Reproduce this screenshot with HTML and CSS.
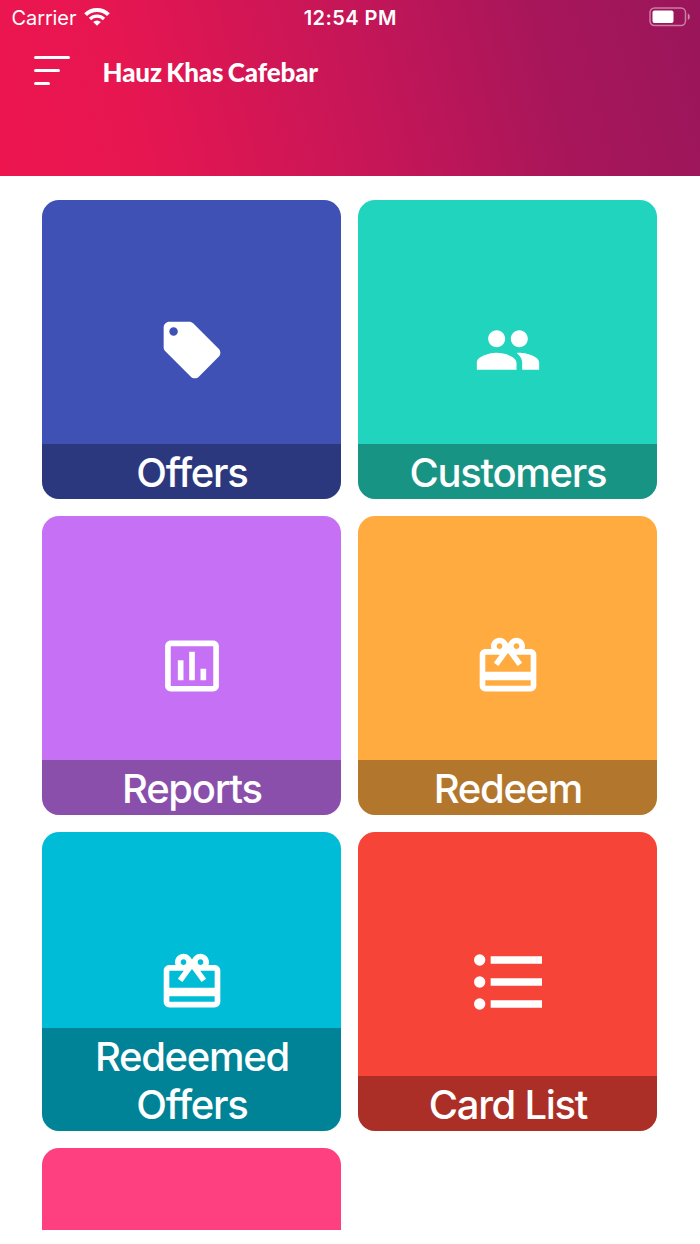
FILE: index.html
```
<!DOCTYPE html>
<html lang="en">
<head>
    <meta charset="UTF-8">
    <meta name="viewport" content="width=device-width, initial-scale=1.0">
    <title>Hauz Khas Cafebar</title>
    <link rel="stylesheet" href="styles.css">
</head>
<body>
    <header class="header">
        <!-- Status bar -->
        <div class="status">
            <div class="carrier">
                <span>Carrier</span>
                <svg class="wifi" viewBox="0 0 26 19">
                    <path d="M1.6 7.6a16.2 16.2 0 0 1 22.8 0" stroke-width="4"/>
                    <path d="M6 12a10 10 0 0 1 14 0" stroke-width="3.4"/>
                    <path class="dot" d="M13 18.8L9.2 15a5.4 5.4 0 0 1 7.6 0z"/>
                </svg>
            </div>
            <div class="time">12:54 PM</div>
            <div class="power">
                <svg class="battery" viewBox="0 0 42 20">
                    <rect class="shell" x="1" y="1" width="35.5" height="17.5" rx="4.5"/>
                    <rect x="3.5" y="3.5" width="21" height="12.5" rx="2"/>
                    <path class="cap" d="M38.8 6.5c2.6 1 2.6 5.5 0 6.5z"/>
                </svg>
            </div>
        </div>

        <!-- Menu and title -->
        <div class="navbar">
            <div class="menu">
                <span class="line"></span>
                <span class="line medium"></span>
                <span class="line short"></span>
            </div>
            <h1>Hauz Khas Cafebar</h1>
        </div>
    </header>

    <main class="grid">
        <div class="card offers">
            <svg class="icon" viewBox="0 0 24 24"><path d="M21.41 11.58l-9-9C12.05 2.22 11.55 2 11 2H4c-1.1 0-2 .9-2 2v7c0 .55.22 1.05.59 1.42l9 9c.36.36.86.58 1.41.58.55 0 1.05-.22 1.41-.59l7-7c.37-.36.59-.86.59-1.41 0-.55-.23-1.06-.59-1.42zM5.5 7C4.67 7 4 6.33 4 5.5S4.67 4 5.5 4 7 4.67 7 5.5 6.33 7 5.5 7z"/></svg>
            <div class="label">Offers</div>
        </div>
        <div class="card customers">
            <svg class="icon" viewBox="0 0 24 24"><path d="M16 11c1.66 0 2.99-1.34 2.99-3S17.66 5 16 5s-3 1.34-3 3 1.34 3 3 3zm-8 0c1.66 0 2.99-1.34 2.99-3S9.66 5 8 5 5 6.34 5 8s1.34 3 3 3zm0 2c-2.33 0-7 1.17-7 3.5V19h14v-2.5c0-2.33-4.67-3.5-7-3.5zm8 0c-.29 0-.62.02-.97.05 1.16.84 1.97 1.97 1.97 3.45V19h6v-2.5c0-2.33-4.67-3.5-7-3.5z"/></svg>
            <div class="label">Customers</div>
        </div>
        <div class="card reports">
            <svg class="icon" viewBox="0 0 24 24"><path d="M9 17H7v-7h2v7zm4 0h-2V7h2v10zm4 0h-2v-4h2v4zm2.5 2.1h-15V5h15v14.1zm0-16.1h-15c-1.1 0-2 .9-2 2v14c0 1.1.9 2 2 2h15c1.1 0 2-.9 2-2V5c0-1.1-.9-2-2-2z"/></svg>
            <div class="label">Reports</div>
        </div>
        <div class="card redeem">
            <svg class="icon" viewBox="0 0 24 24"><path d="M20 6h-2.18c.11-.31.18-.65.18-1 0-1.66-1.34-3-3-3-1.05 0-1.96.54-2.5 1.35l-.5.67-.5-.68C10.96 2.54 10.05 2 9 2 7.34 2 6 3.34 6 5c0 .35.07.69.18 1H4c-1.11 0-1.99.89-1.99 2L2 19c0 1.11.89 2 2 2h16c1.11 0 2-.89 2-2V8c0-1.11-.89-2-2-2zm-5-2c.55 0 1 .45 1 1s-.45 1-1 1-1-.45-1-1 .45-1 1-1zM9 4c.55 0 1 .45 1 1s-.45 1-1 1-1-.45-1-1 .45-1 1-1zm11 15H4v-2h16v2zm0-5H4V8h5.08L7 10.83 8.62 12 11 8.76l1-1.36 1 1.36L15.38 12 17 10.83 14.92 8H20v6z"/></svg>
            <div class="label">Redeem</div>
        </div>
        <div class="card redeemed">
            <svg class="icon" viewBox="0 0 24 24"><path d="M20 6h-2.18c.11-.31.18-.65.18-1 0-1.66-1.34-3-3-3-1.05 0-1.96.54-2.5 1.35l-.5.67-.5-.68C10.96 2.54 10.05 2 9 2 7.34 2 6 3.34 6 5c0 .35.07.69.18 1H4c-1.11 0-1.99.89-1.99 2L2 19c0 1.11.89 2 2 2h16c1.11 0 2-.89 2-2V8c0-1.11-.89-2-2-2zm-5-2c.55 0 1 .45 1 1s-.45 1-1 1-1-.45-1-1 .45-1 1-1zM9 4c.55 0 1 .45 1 1s-.45 1-1 1-1-.45-1-1 .45-1 1-1zm11 15H4v-2h16v2zm0-5H4V8h5.08L7 10.83 8.62 12 11 8.76l1-1.36 1 1.36L15.38 12 17 10.83 14.92 8H20v6z"/></svg>
            <div class="label">Redeemed<br>Offers</div>
        </div>
        <div class="card card-list">
            <svg class="icon" viewBox="0 0 24 24">
                <circle cx="4" cy="6" r="1.55"/>
                <circle cx="4" cy="12" r="1.55"/>
                <circle cx="4" cy="18" r="1.55"/>
                <path d="M7 5h14v2H7zM7 11h14v2H7zM7 17h14v2H7z"/>
            </svg>
            <div class="label">Card List</div>
        </div>
        <div class="card more"></div>
    </main>
</body>
</html>
```
FILE: styles.css
```
* {
    box-sizing: border-box;
}
body {
    margin: 0;
    height: 1244px;
    background: #fff;
    color: #fff;
    font-family: Inter, "Liberation Sans", sans-serif;
    overflow: hidden;
}
svg {
    display: block;
    fill: #fff;
}
.header {
    height: 176px;
    background: linear-gradient(76deg, #ee154f 0%, #e61651 20%, #c41658 53%, #a8165a 77%, #9a155b 100%);
}
.status {
    display: grid;
    grid-template-columns: 1fr auto 1fr;
    align-items: center;
    height: 36px;
    padding: 0 9px 0 11.5px;
    font-size: 20px;
}
.carrier {
    display: flex;
    align-items: center;
    gap: 8px;
    letter-spacing: -0.1px;
}
.wifi {
    width: 26px;
    height: 19px;
    margin-top: -3px;
}
.wifi path {
    fill: none;
    stroke: #fff;
}
.wifi .dot {
    fill: #fff;
    stroke: none;
}
.time {
    margin-left: -2px;
    font-weight: 600;
    letter-spacing: 0.45px;
}
.power {
    display: flex;
    justify-content: flex-end;
}
.battery {
    width: 42px;
    height: 20px;
    margin-top: -2px;
}
.battery .shell {
    fill: none;
    stroke: rgba(255, 255, 255, 0.45);
    stroke-width: 1.5;
}
.battery .cap {
    fill: rgba(255, 255, 255, 0.5);
}
.navbar {
    display: flex;
    align-items: center;
    height: 68px;
    padding-left: 34px;
}
.menu {
    display: flex;
    flex-direction: column;
    gap: 10px;
    width: 68.5px;
}
.line {
    width: 36px;
    height: 3px;
    border-radius: 2px;
    background: #fff;
}
.line.medium {
    width: 26px;
}
.line.short {
    width: 16px;
}
h1 {
    margin: 3px 0 0;
    font-family: Lato, sans-serif;
    font-size: 26px;
    font-weight: 900;
    letter-spacing: -0.15px;
    word-spacing: -1.5px;
    white-space: nowrap;
}
/* cards are cut off at the bottom edge of the scroll area */
.grid {
    display: grid;
    grid-template-columns: 299px 299px;
    grid-auto-rows: 299px;
    gap: 17px;
    height: 1054px;
    padding: 24px 42.4px 0;
    overflow: hidden;
}
.card {
    position: relative;
    display: flex;
    align-items: center;
    justify-content: center;
    border-radius: 17px;
    overflow: hidden;
}
.icon {
    width: 68px;
    height: 68px;
}
.label {
    position: absolute;
    left: 0;
    right: 0;
    bottom: 0;
    padding: 5px 0 2px;
    background: rgba(0, 0, 0, 0.3);
    font-size: 40px;
    font-weight: 500;
    line-height: 48px;
    letter-spacing: -1.3px;
    text-align: center;
}
.offers {
    background: #3f51b5;
}
.customers {
    background: #21d4bd;
}
.reports {
    background: #c671f5;
}
.redeem {
    background: #ffab40;
}
.redeemed {
    background: #00bcd7;
}
.card-list {
    background: #f64438;
}
.card-list .icon {
    width: 88px;
    height: 88px;
    margin-left: 2px;
}
.more {
    background: #ff4080;
}
```
